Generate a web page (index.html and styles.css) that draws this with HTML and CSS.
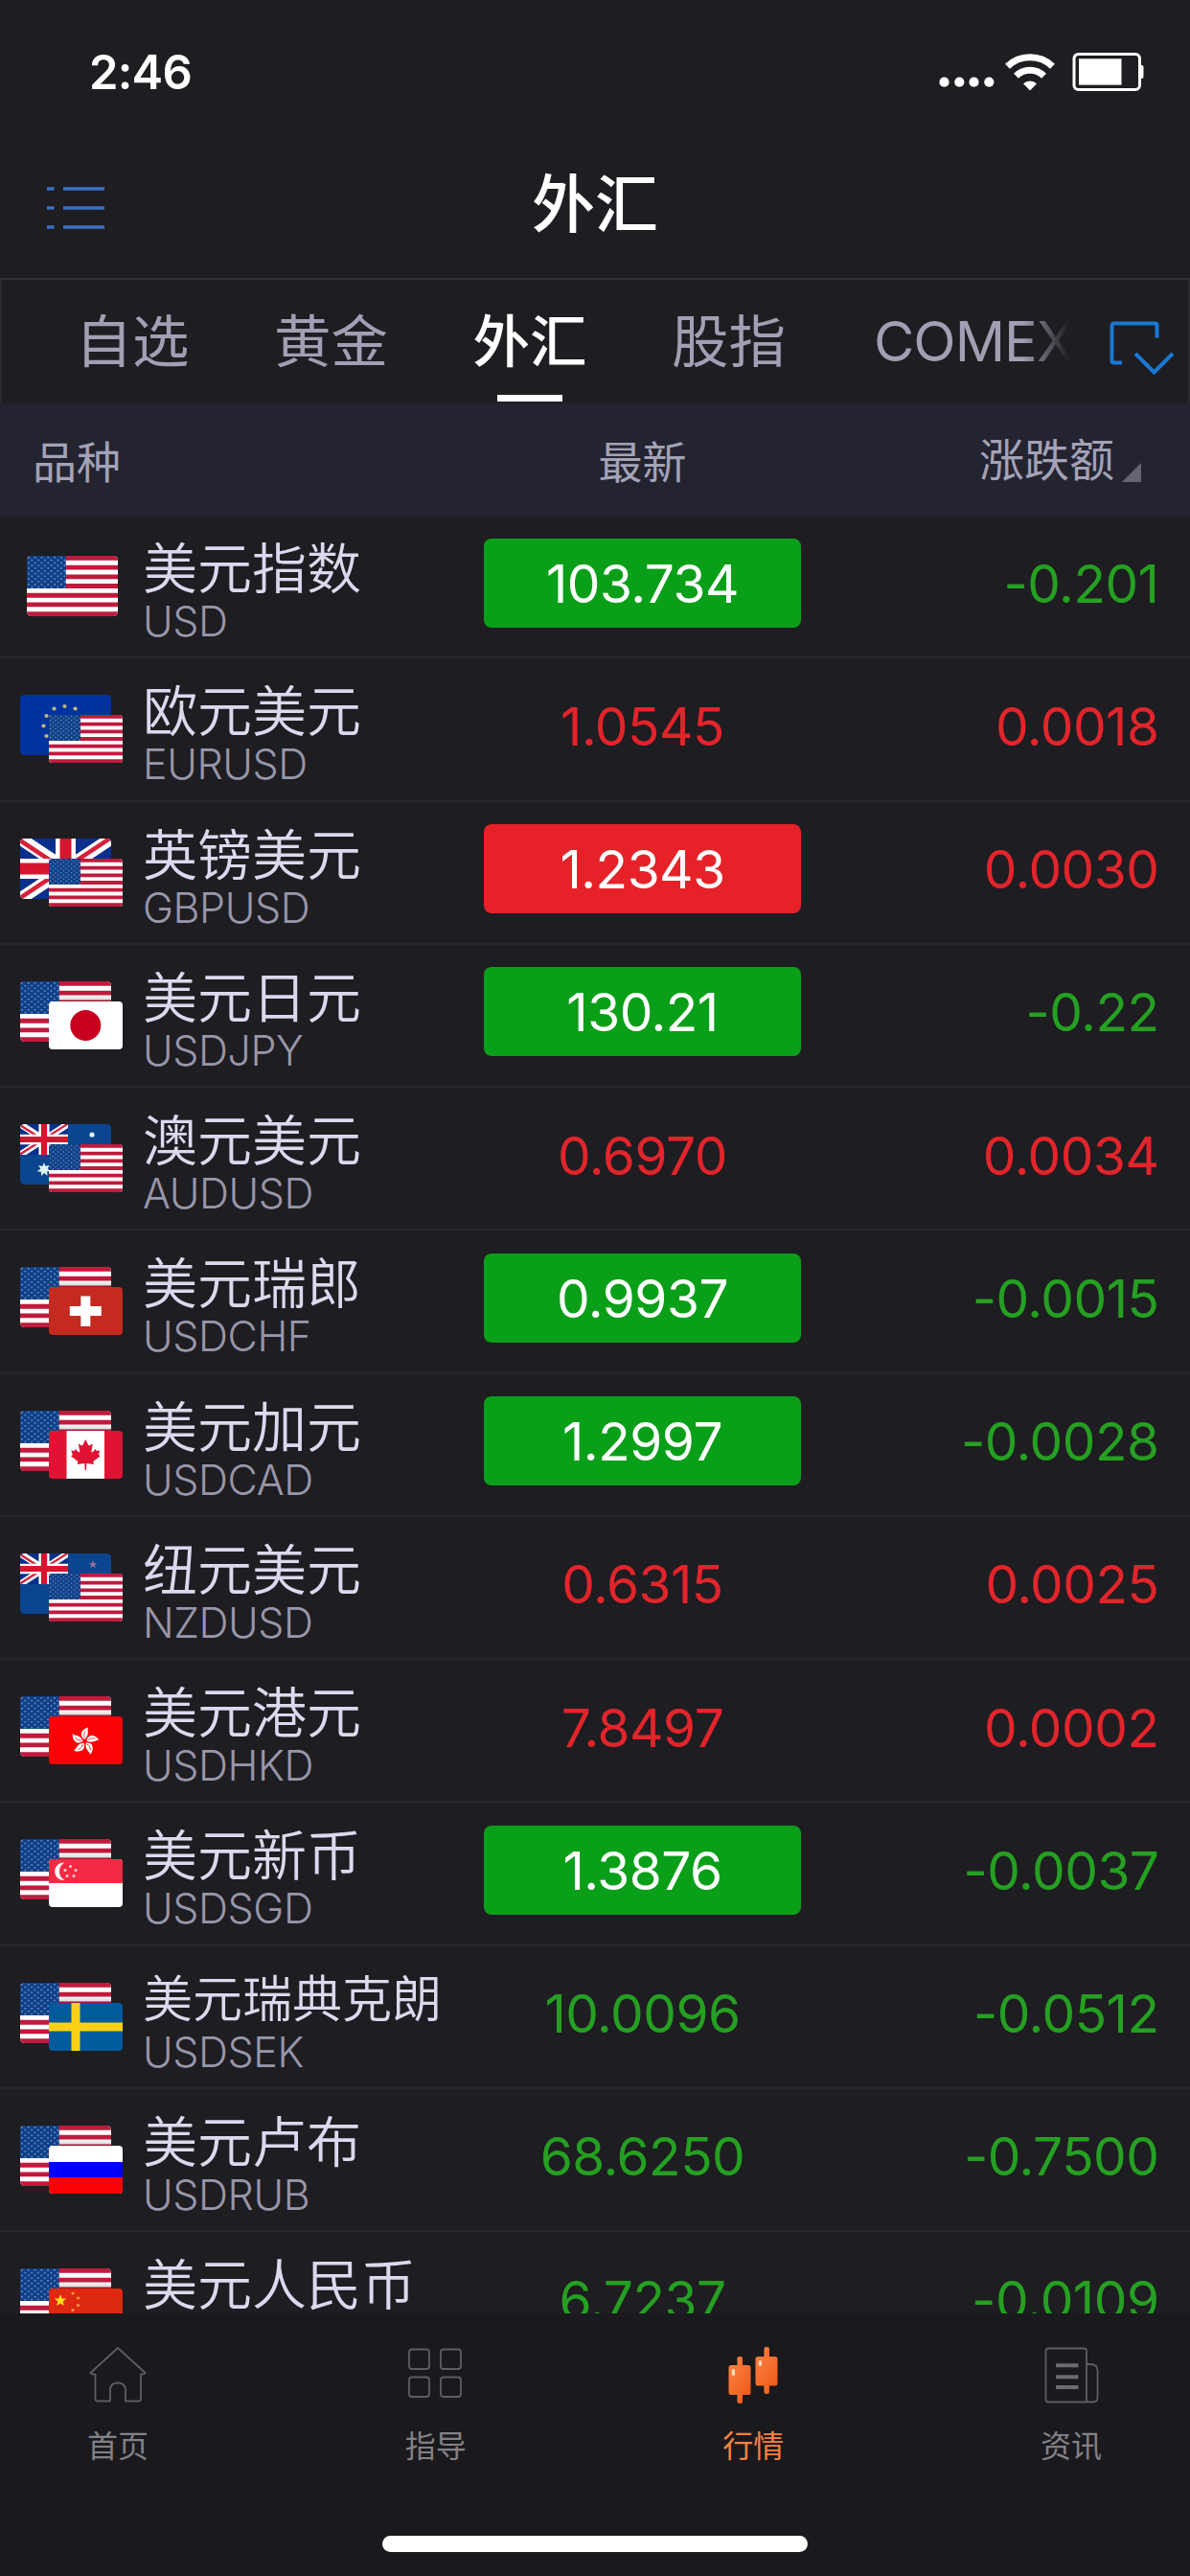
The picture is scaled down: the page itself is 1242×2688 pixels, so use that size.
FILE: index.html
```html
<!DOCTYPE html>
<html lang="zh-CN">
<head>
<meta charset="utf-8">
<title>外汇</title>
<link rel="stylesheet" href="styles.css">
</head>
<body>
<svg class="defs" width="0" height="0" aria-hidden="true">
  <defs>
    <pattern id="stars" width="6.8" height="5.6" patternUnits="userSpaceOnUse">
      <circle cx="1.9" cy="1.7" r="0.85" fill="#8fb0dc"/>
      <circle cx="5.3" cy="4.5" r="0.85" fill="#8fb0dc"/>
    </pattern>
    <clipPath id="round"><rect width="95" height="63" rx="4.5"/></clipPath>
    <linearGradient id="candle" x1="0" y1="0" x2="1" y2="1">
      <stop offset="0" stop-color="#fb8140"/>
      <stop offset="1" stop-color="#ee5a1a"/>
    </linearGradient>
    <linearGradient id="shade" x1="0" y1="0" x2="0" y2="1">
      <stop offset="0" stop-color="#000" stop-opacity="0"/>
      <stop offset="1" stop-color="#000" stop-opacity="0.2"/>
    </linearGradient>
  </defs>
  <symbol id="us" viewBox="0 0 95 63" preserveAspectRatio="none">
    <g clip-path="url(#round)">
      <rect width="95" height="63" fill="#fff"/>
      <path d="M0 2.4H95M0 12.1H95M0 21.8H95M0 31.5H95M0 41.2H95M0 50.9H95M0 60.6H95" stroke="#c01a3c" stroke-width="4.85"/>
      <rect width="40.7" height="34" fill="#0f3f86"/>
      <rect width="40.7" height="34" fill="url(#stars)"/>
    </g>
  </symbol>
  <symbol id="jack" viewBox="0 0 95 63" preserveAspectRatio="none">
    <rect width="95" height="63" fill="#0a2f8c"/>
    <path d="M0 0L95 63M95 0L0 63" stroke="#fff" stroke-width="13"/>
    <path d="M0 2L95 65M95 -1L0 62" stroke="#d8203a" stroke-width="4.5"/>
    <path d="M47.5 0V63M0 31.5H95" stroke="#fff" stroke-width="21"/>
    <path d="M47.5 0V63M0 31.5H95" stroke="#d8152f" stroke-width="12"/>
  </symbol>
  <symbol id="gb" viewBox="0 0 95 63"><g clip-path="url(#round)"><use href="#jack" width="95" height="63"/></g></symbol>
  <symbol id="eu" viewBox="0 0 95 63">
    <rect width="95" height="63" rx="4.5" fill="#0033a0"/>
    <g fill="#c3b878">
      <circle cx="46.5" cy="12" r="2.1"/><circle cx="57.5" cy="14.5" r="2.1"/><circle cx="35.5" cy="14.5" r="2.1"/>
      <circle cx="27.5" cy="22" r="2.1"/><circle cx="24.5" cy="32.5" r="2.1"/><circle cx="27.5" cy="43" r="2.1"/>
    </g>
  </symbol>
  <symbol id="au" viewBox="0 0 95 63"><g clip-path="url(#round)">
    <rect width="95" height="63" fill="#0b4590"/>
    <use href="#jack" width="50" height="32"/>
    <path d="M25 40l1.6 4 4.1-1.4-2 3.8 3.6 2.3-4.2.8.5 4.3-3.6-2.7-3 3-.1-4.4-4.4-.5 3.8-2.5-2.1-3.7 4.2 1z" fill="#dff3f5"/>
    <circle cx="75" cy="11" r="2.6" fill="#e8f4ff"/>
  </g></symbol>
  <symbol id="nz" viewBox="0 0 95 63"><g clip-path="url(#round)">
    <rect width="95" height="63" fill="#0b4590"/>
    <use href="#jack" width="50" height="32"/>
    <path d="M76 7l1.2 2.9 3.1.2-2.4 2 .8 3-2.7-1.7-2.7 1.7.8-3-2.4-2 3.1-.2z" fill="#8c6f9c"/>
  </g></symbol>
  <symbol id="jp" viewBox="0 0 77 50"><rect width="77" height="50" rx="4" fill="#fff"/><circle cx="38.3" cy="25" r="16" fill="#c8001e"/></symbol>
  <symbol id="ch" viewBox="0 0 77 50"><rect width="77" height="50" rx="4" fill="#c52a20"/><path d="M33.3 9.5h10v10.500h11.500v10h-11.500v11h-10v-11h-11.500v-10h11.500z" fill="#fff"/></symbol>
  <symbol id="ca" viewBox="0 0 77 50">
    <rect width="77" height="50" rx="4" fill="#e11334"/><rect x="18.500" width="39.500" height="50" fill="#fff"/>
    <path transform="translate(38.300 25)" d="M0-16L3-10 4-9.500 7.500-11.500 6-3 7-2.500 10.500-6 11.500-4 15-4.500 13.500 0 15.200 1.500 8 7 8.500 10 1 9 .7 16H-.7L-1 9-8.500 10-8 7-15.200 1.500-13.500 0-15-4.500-11.500-4-10.500-6-7-2.500-6-3-7.500-11.500-4-9.500-3-10z" fill="#e11334"/>
  </symbol>
  <symbol id="petal" viewBox="-20 -20 40 40" overflow="visible">
    <path d="M0-2C-6-5-4.500-12.500 3.500-14.500 2-11.500 5.500-7.500 0-2z" fill="#fff"/>
    <path d="M0-3.500C-1.500-6-1-9 .8-11" fill="none" stroke="#f33" stroke-width=".9"/>
  </symbol>
  <symbol id="hk" viewBox="0 0 77 50">
    <rect width="77" height="50" rx="4" fill="#fb0207"/>
    <g transform="translate(37.500 26)">
      <use href="#petal" x="-20" y="-20" width="40" height="40"/>
      <use href="#petal" x="-20" y="-20" width="40" height="40" transform="rotate(72)"/>
      <use href="#petal" x="-20" y="-20" width="40" height="40" transform="rotate(144)"/>
      <use href="#petal" x="-20" y="-20" width="40" height="40" transform="rotate(216)"/>
      <use href="#petal" x="-20" y="-20" width="40" height="40" transform="rotate(288)"/>
    </g>
  </symbol>
  <symbol id="sg" viewBox="0 0 77 50">
    <rect width="77" height="50" rx="4" fill="#fff"/>
    <path d="M0 25V4a4 4 0 0 1 4-4H73a4 4 0 0 1 4 4V25z" fill="#f42a45"/>
    <path d="M16.500 3.500a9.300 9.300 0 1 0 0 18.500a10.500 10.500 0 0 1 0-18.500z" fill="#fff"/>
    <g fill="#ffd5da"><circle cx="22.500" cy="7.500" r="1.500"/><circle cx="17" cy="11.500" r="1.500"/><circle cx="28" cy="11.500" r="1.500"/><circle cx="19" cy="17.500" r="1.500"/><circle cx="26" cy="17.500" r="1.500"/></g>
  </symbol>
  <symbol id="se" viewBox="0 0 77 50"><rect width="77" height="50" rx="4" fill="#005b9c"/><path d="M28 0V50M0 25H77" stroke="#fdd116" stroke-width="9"/></symbol>
  <symbol id="ru" viewBox="0 0 77 50">
    <rect width="77" height="50" rx="4" fill="#fff"/><path d="M0 33H77V46a4 4 0 0 1-4 4H4a4 4 0 0 1-4-4z" fill="#fb0207"/><rect y="17" width="77" height="16" fill="#0000fb"/>
  </symbol>
  <symbol id="cn" viewBox="0 0 77 50">
    <rect width="77" height="50" rx="4" fill="#de2812"/>
    <path d="M12 6l1.700 4.400 4.600.2-3.600 2.900 1.200 4.500-3.900-2.600-3.900 2.600 1.200-4.500-3.600-2.900 4.600-.2z" fill="#ffdf1a"/>
    <g fill="#f59a3c"><circle cx="25" cy="5" r="1.600"/><circle cx="30.500" cy="10" r="1.600"/><circle cx="30.500" cy="17.500" r="1.600"/><circle cx="25" cy="22.500" r="1.600"/></g>
  </symbol>
  <symbol id="shadow" viewBox="0 0 95 63"><rect x="40" y="14" width="55" height="7" fill="url(#shade)"/></symbol>
</svg>

<div class="screen">
  <header class="status">
    <span class="time">2:46</span>
    <svg class="status-icons" width="216" height="44" viewBox="0 0 216 44">
      <g fill="#fff">
        <circle cx="7.500" cy="32.700" r="5.100"/><circle cx="23.300" cy="32.700" r="5.100"/><circle cx="38.500" cy="32.700" r="5.100"/><circle cx="54.300" cy="32.700" r="5.100"/>
        <path d="M97 41.500L90 34.300A10 10 0 0 1 104 34.300z"/>
      </g>
      <path d="M82.500 26.300A20.500 20.500 0 0 1 111.500 26.300" fill="none" stroke="#fff" stroke-width="7"/>
      <path d="M73.500 16.200A34 34 0 0 1 120.500 16.200" fill="none" stroke="#fff" stroke-width="7"/>
      <rect x="143" y="3.500" width="68.500" height="37" rx="4.500" fill="none" stroke="#fff" stroke-width="3"/>
      <rect x="148" y="8.300" width="44.500" height="27.300" fill="#fff"/>
      <path d="M212 15h1.500q2 0 2 2v10q0 2-2 2h-1.500z" fill="#fff"/>
    </svg>
  </header>

  <div class="titlebar">
    <svg class="menu" width="62" height="46" viewBox="0 0 62 46">
      <path d="M1 3H8.500M18 3H61M1 23H8.500M18 23H61M1 43H8.500M18 43H61" stroke="#3a70c4" stroke-width="3.600"/>
    </svg>
    <h1>外汇</h1>
  </div>

  <nav class="tabs">
    <div class="tab-list">
      <span class="tab">自选</span><span class="tab">黄金</span><span class="tab active">外汇</span><span class="tab">股指</span><span class="tab comex">COMEX</span>
    </div>
    <svg class="tab-more" width="70" height="58" viewBox="0 0 70 58">
      <path d="M15 44.500H6.500Q4.500 44.500 4.500 42.500V6.500Q4.500 3.500 7.500 3.500H49.500Q51.500 3.500 51.500 5.500V18.500M29 35L48.500 54.500L68 35" fill="none" stroke="#1b78d2" stroke-width="4"/>
    </svg>
  </nav>

  <div class="head">
    <span class="h-name">品种</span><span class="h-price">最新</span>
    <span class="h-change">涨跌额<svg width="20" height="20" viewBox="0 0 20 20"><path d="M20 0V20H0z" fill="#646473"/></svg></span>
  </div>

  <main class="list">
    <div class="row">
      <svg class="flags" width="108" height="72" viewBox="0 0 108 72"><use href="#us" x="7" y="4" width="95" height="63"/></svg>
      <div class="label"><div class="name">美元指数</div><div class="code">USD</div></div>
      <div class="price badge down">103.734</div><div class="change down">-0.201</div>
    </div>
    <div class="row">
      <svg class="flags" width="108" height="72" viewBox="0 0 108 72"><use href="#eu" width="95" height="63"/><use href="#us" x="30" y="21" width="77" height="50"/></svg>
      <div class="label"><div class="name">欧元美元</div><div class="code">EURUSD</div></div>
      <div class="price up">1.0545</div><div class="change up">0.0018</div>
    </div>
    <div class="row">
      <svg class="flags" width="108" height="72" viewBox="0 0 108 72"><use href="#gb" width="95" height="63"/><use href="#us" x="30" y="21" width="77" height="50"/></svg>
      <div class="label"><div class="name">英镑美元</div><div class="code">GBPUSD</div></div>
      <div class="price badge up">1.2343</div><div class="change up">0.0030</div>
    </div>
    <div class="row">
      <svg class="flags" width="108" height="72" viewBox="0 0 108 72"><use href="#us" width="95" height="63"/><use href="#shadow" width="95" height="63"/><use href="#jp" x="30" y="21" width="77" height="50"/></svg>
      <div class="label"><div class="name">美元日元</div><div class="code">USDJPY</div></div>
      <div class="price badge down">130.21</div><div class="change down">-0.22</div>
    </div>
    <div class="row">
      <svg class="flags" width="108" height="72" viewBox="0 0 108 72"><use href="#au" width="95" height="63"/><use href="#us" x="30" y="21" width="77" height="50"/></svg>
      <div class="label"><div class="name">澳元美元</div><div class="code">AUDUSD</div></div>
      <div class="price up">0.6970</div><div class="change up">0.0034</div>
    </div>
    <div class="row">
      <svg class="flags" width="108" height="72" viewBox="0 0 108 72"><use href="#us" width="95" height="63"/><use href="#shadow" width="95" height="63"/><use href="#ch" x="30" y="21" width="77" height="50"/></svg>
      <div class="label"><div class="name">美元瑞郎</div><div class="code">USDCHF</div></div>
      <div class="price badge down">0.9937</div><div class="change down">-0.0015</div>
    </div>
    <div class="row">
      <svg class="flags" width="108" height="72" viewBox="0 0 108 72"><use href="#us" width="95" height="63"/><use href="#shadow" width="95" height="63"/><use href="#ca" x="30" y="21" width="77" height="50"/></svg>
      <div class="label"><div class="name">美元加元</div><div class="code">USDCAD</div></div>
      <div class="price badge down">1.2997</div><div class="change down">-0.0028</div>
    </div>
    <div class="row">
      <svg class="flags" width="108" height="72" viewBox="0 0 108 72"><use href="#nz" width="95" height="63"/><use href="#us" x="30" y="21" width="77" height="50"/></svg>
      <div class="label"><div class="name">纽元美元</div><div class="code">NZDUSD</div></div>
      <div class="price up">0.6315</div><div class="change up">0.0025</div>
    </div>
    <div class="row">
      <svg class="flags" width="108" height="72" viewBox="0 0 108 72"><use href="#us" width="95" height="63"/><use href="#shadow" width="95" height="63"/><use href="#hk" x="30" y="21" width="77" height="50"/></svg>
      <div class="label"><div class="name">美元港元</div><div class="code">USDHKD</div></div>
      <div class="price up">7.8497</div><div class="change up">0.0002</div>
    </div>
    <div class="row">
      <svg class="flags" width="108" height="72" viewBox="0 0 108 72"><use href="#us" width="95" height="63"/><use href="#shadow" width="95" height="63"/><use href="#sg" x="30" y="21" width="77" height="50"/></svg>
      <div class="label"><div class="name">美元新币</div><div class="code">USDSGD</div></div>
      <div class="price badge down">1.3876</div><div class="change down">-0.0037</div>
    </div>
    <div class="row">
      <svg class="flags" width="108" height="72" viewBox="0 0 108 72"><use href="#us" width="95" height="63"/><use href="#shadow" width="95" height="63"/><use href="#se" x="30" y="21" width="77" height="50"/></svg>
      <div class="label"><div class="name long">美元瑞典克朗</div><div class="code">USDSEK</div></div>
      <div class="price down">10.0096</div><div class="change down">-0.0512</div>
    </div>
    <div class="row">
      <svg class="flags" width="108" height="72" viewBox="0 0 108 72"><use href="#us" width="95" height="63"/><use href="#shadow" width="95" height="63"/><use href="#ru" x="30" y="21" width="77" height="50"/></svg>
      <div class="label"><div class="name">美元卢布</div><div class="code">USDRUB</div></div>
      <div class="price down">68.6250</div><div class="change down">-0.7500</div>
    </div>
    <div class="row">
      <svg class="flags" width="108" height="72" viewBox="0 0 108 72"><use href="#us" width="95" height="63"/><use href="#shadow" width="95" height="63"/><use href="#cn" x="30" y="21" width="77" height="50"/></svg>
      <div class="label"><div class="name">美元人民币</div></div>
      <div class="price down">6.7237</div><div class="change down">-0.0109</div>
    </div>
  </main>

  <footer class="bottom">
    <nav class="nav">
      <div class="nav-item">
        <svg width="64" height="64" viewBox="0 0 64 64"><path d="M32 4L60.500 30Q59.500 32 56 31.500V57Q56 59.500 53.500 59.500H40V47Q39 40.500 32 40.500Q24.500 40.500 24 47V59.500H11Q8.500 59.500 8.500 57V31.500Q4.500 32 3.500 30z" fill="none" stroke="#5e5d62" stroke-width="1.800" stroke-linejoin="round"/></svg>
        <span>首页</span>
      </div>
      <div class="nav-item">
        <svg width="64" height="64" viewBox="0 0 64 64"><g fill="none" stroke="#5e5d62" stroke-width="1.800"><rect x="4" y="5.500" width="21" height="20.500" rx="3"/><rect x="37" y="5.500" width="21" height="20.500" rx="3"/><rect x="4" y="34.500" width="21" height="20.500" rx="3"/><rect x="37" y="34.500" width="21" height="20.500" rx="3"/></g></svg>
        <span>指导</span>
      </div>
      <div class="nav-item current">
        <svg width="64" height="64" viewBox="0 0 64 64"><g fill="url(#candle)"><rect x="15.500" y="13" width="5.500" height="49" rx="2"/><rect x="6.500" y="22" width="23" height="31" rx="2.500"/><rect x="43.500" y="3" width="5.500" height="49" rx="2"/><rect x="34.500" y="13" width="23" height="30.500" rx="2.500"/></g><rect x="9.800" y="26" width="3.200" height="7" rx="1.600" fill="#ffd9bd"/><rect x="37.800" y="17" width="3.200" height="6" rx="1.600" fill="#ffd9bd"/></svg>
        <span>行情</span>
      </div>
      <div class="nav-item">
        <svg width="64" height="64" viewBox="0 0 64 64"><path d="M8.500 4.500H45.500Q48 4.500 48 7V60.500H8.500Q5.500 60.500 5.500 57.500V7.500Q5.500 4.500 8.500 4.500zM48 21H52.500Q59.500 21 59.500 28V56Q59.500 60.500 55 60.500H48" fill="none" stroke="#5e5d62" stroke-width="1.800"/><path d="M16 22.300H39.500M16 34.300H39.500M16 45H39.500" stroke="#6c6b70" stroke-width="4"/></svg>
        <span>资讯</span>
      </div>
    </nav>
    <div class="home-bar"></div>
  </footer>
</div>
</body>
</html>
```
FILE: styles.css
```css
* { box-sizing: border-box; margin: 0; padding: 0; }
body {
  background: #1e1d21;
  color: #fff;
  font-family: Inter, "Noto Sans CJK SC", sans-serif;
}
.defs { display: block; height: 0; }
svg { display: block; flex: none; }
.screen { width: 1242px; height: 2688px; display: flex; flex-direction: column; overflow: hidden; }

.status { height: 140px; display: flex; justify-content: space-between; align-items: flex-start; padding: 53px 48px 0 93px; }
.time { font-size: 49px; font-weight: 600; line-height: 46px; letter-spacing: -0.8px; }

.titlebar { height: 150px; display: grid; grid-template-columns: 62px 1fr 62px; padding: 0 48px; }
.menu { margin-top: 54px; }
h1 { font-size: 66px; font-weight: 500; line-height: 80px; margin-top: 33px; text-align: center; }

.tabs { height: 131px; border: 2px solid #2b2a2f; border-top-color: #323136; border-bottom: 0; display: flex; }
.tab-list {
  width: 1114px; height: 129px; padding-left: 76px; display: flex; overflow: hidden;
  color: #a09fb3; font-size: 59.5px; white-space: nowrap;
  -webkit-mask-image: linear-gradient(90deg, #000 1065px, transparent 1114px);
  mask-image: linear-gradient(90deg, #000 1065px, transparent 1114px);
}
.tab { flex: none; width: 120px; margin-right: 87.5px; line-height: 129px; text-align: center; }
.tab.active { color: #fff; font-weight: 500; display: flex; flex-direction: column; align-items: center; }
.tab.active::after { content: ""; width: 68px; height: 7px; background: #fff; margin-top: -9px; }
.tab.comex { width: auto; margin-left: 4px; font-size: 58px; letter-spacing: -1px; }
.tab-more { margin: 42px 0 0 40px; }

.head { height: 118px; background: #242431; color: #a3a2b6; font-size: 46px; line-height: 123px; display: grid; grid-template-columns: 505px 331px 1fr; }
.h-name { padding-left: 34px; }
.h-price { text-align: center; }
.h-change { display: flex; justify-content: flex-end; align-items: flex-start; gap: 8px; padding-right: 51px; font-size: 47px; line-height: 118px; }
.h-change svg { margin-top: 62px; }

.list { height: 1876px; overflow: hidden; margin-top: -1px; }
.row {
  height: 149.25px; border-bottom: 2px solid #27262b;
  display: grid; grid-template-columns: 108px 376px 331px 1fr; align-items: start;
  padding: 0 32.5px 0 21px;
}
.flags { margin-top: 38px; }
.label { padding: 24px 0 0 20px; white-space: nowrap; }
.name { color: #dad9ee; font-size: 57px; line-height: 64px; font-weight: 350; height: 62px; }
.name.long { font-size: 52px; }
.code { color: #9896aa; font-size: 43px; line-height: 48px; font-weight: 350; letter-spacing: -0.4px; }
.price, .change { font-size: 55px; line-height: 95px; height: 93px; margin-top: 23.500px; letter-spacing: -0.5px; }
.price { text-align: center; border-radius: 8px; }
.change { text-align: right; }
.up { color: #e2242b; }
.down { color: #25a022; }
.badge { color: #fff; }
.badge.up { background: #e62228; }
.badge.down { background: #0a9f19; }

.bottom { flex: 1; background: #1a191d; display: flex; flex-direction: column; align-items: center; }
.nav { width: 100%; height: 232px; display: flex; justify-content: space-between; padding: 32px 24px 0 23px; }
.nav-item { width: 200px; display: flex; flex-direction: column; align-items: center; color: #828186; font-size: 32px; line-height: 40px; }
.nav-item span { margin-top: 23px; }
.nav-item.current { color: #f9803f; }
.home-bar { width: 444px; height: 17px; border-radius: 9px; background: #fff; }
```
